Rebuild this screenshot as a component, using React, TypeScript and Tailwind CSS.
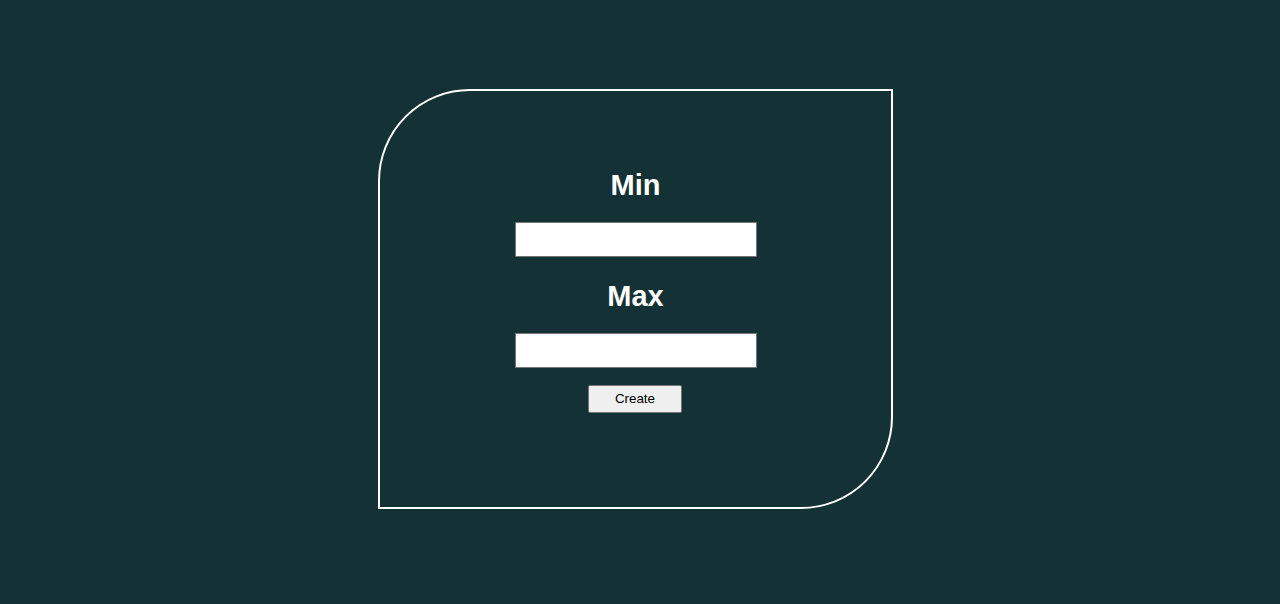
import React from "react";

export default function App() {
  return (
    <div className="w-[1280px] h-[604px] bg-[#143235] pt-[89px] pl-[378px] overflow-hidden" style={{ fontFamily: '"Liberation Sans", Arial, sans-serif' }}>
      <div className="w-[515px] h-[420px] border-2 border-white rounded-tl-[92px] rounded-br-[92px] flex flex-col items-center pt-[77px]">
        <h2 className="text-[29px] leading-[34px] font-bold text-white">Min</h2>
        <input type="text" className="mt-[20px] ml-[1px] w-[242px] h-[35px] bg-white border border-[#767676] outline-none" />
        <h2 className="mt-[22px] text-[29px] leading-[34px] font-bold text-white">Max</h2>
        <input type="text" className="mt-[20px] ml-[1px] w-[242px] h-[35px] bg-white border border-[#767676] outline-none" />
        <button className="mt-[17px] mr-[1px] w-[94px] h-[28px] bg-[#efefef] border border-[#767676] rounded-[2px] text-[13.33px] text-black">
          Create
        </button>
      </div>
    </div>
  );
}
